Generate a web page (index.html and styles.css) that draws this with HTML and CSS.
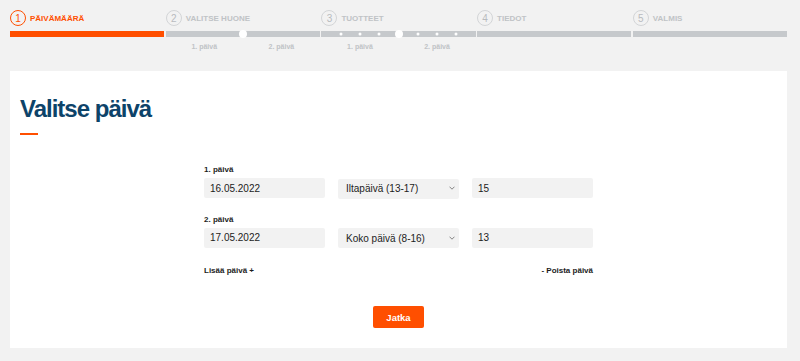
FILE: index.html
```html
<!DOCTYPE html>
<html lang="fi">
<head>
    <meta charset="UTF-8">
    <meta name="viewport" content="width=device-width, initial-scale=1.0">
    <title>Valitse päivä</title>
    <link rel="stylesheet" href="styles.css">
</head>
<body>
    <div class="page">
        <!-- Vaiheet -->
        <div class="steps">
            <div class="step active">
                <div class="step-head"><span class="step-num">1</span><span class="step-name">Päivämäärä</span></div>
                <div class="step-bar"></div>
            </div>
            <div class="step">
                <div class="step-head"><span class="step-num">2</span><span class="step-name">Valitse huone</span></div>
                <div class="step-bar">
                    <span class="mark big" style="left: 50%"></span>
                </div>
                <div class="step-days"><span>1. päivä</span><span>2. päivä</span></div>
            </div>
            <div class="step">
                <div class="step-head"><span class="step-num">3</span><span class="step-name">Tuotteet</span></div>
                <div class="step-bar">
                    <span class="mark" style="left: 12.5%"></span>
                    <span class="mark" style="left: 25%"></span>
                    <span class="mark" style="left: 37.5%"></span>
                    <span class="mark big" style="left: 50%"></span>
                    <span class="mark" style="left: 62.5%"></span>
                    <span class="mark" style="left: 75%"></span>
                    <span class="mark" style="left: 87.5%"></span>
                </div>
                <div class="step-days"><span>1. päivä</span><span>2. päivä</span></div>
            </div>
            <div class="step">
                <div class="step-head"><span class="step-num">4</span><span class="step-name">Tiedot</span></div>
                <div class="step-bar"></div>
            </div>
            <div class="step">
                <div class="step-head"><span class="step-num">5</span><span class="step-name">Valmis</span></div>
                <div class="step-bar"></div>
            </div>
        </div>

        <!-- Päivän valinta -->
        <div class="card">
            <h1>Valitse päivä</h1>
            <div class="title-line"></div>

            <form class="days">
                <div class="day">
                    <label class="day-label">1. päivä</label>
                    <div class="day-fields">
                        <input class="field" type="text" value="16.05.2022">
                        <div class="select-wrap">
                            <select class="field">
                                <option>Iltapäivä (13-17)</option>
                                <option>Koko päivä (8-16)</option>
                            </select>
                            <svg class="chevron" width="6" height="4" viewBox="0 0 6 4"><path d="M0.5 0.7 L3 3.2 L5.5 0.7" fill="none" stroke="#777" stroke-width="0.9"/></svg>
                        </div>
                        <input class="field" type="text" value="15">
                    </div>
                </div>
                <div class="day">
                    <label class="day-label">2. päivä</label>
                    <div class="day-fields">
                        <input class="field" type="text" value="17.05.2022">
                        <div class="select-wrap">
                            <select class="field">
                                <option>Koko päivä (8-16)</option>
                                <option>Iltapäivä (13-17)</option>
                            </select>
                            <svg class="chevron" width="6" height="4" viewBox="0 0 6 4"><path d="M0.5 0.7 L3 3.2 L5.5 0.7" fill="none" stroke="#777" stroke-width="0.9"/></svg>
                        </div>
                        <input class="field" type="text" value="13">
                    </div>
                </div>
                <div class="day-actions">
                    <a class="day-link">Lisää päivä +</a>
                    <a class="day-link">- Poista päivä</a>
                </div>
            </form>

            <div class="submit">
                <button class="btn" type="button">Jatka</button>
            </div>
        </div>
    </div>
</body>
</html>
```

FILE: styles.css
```css
:root {
    --bg: #f2f2f2;
    --orange: #ff4f00;
    --blue: #0d4369;
    --bar: #c6c9cc;
    --muted: #c0c3c6;
    --text: #1c1c1c;
}

* {
    margin: 0;
    padding: 0;
    box-sizing: border-box;
}

body {
    font-family: 'Liberation Sans', Arial, sans-serif;
    background: var(--bg);
    color: var(--text);
}

.page {
    width: 777px;
    margin-left: 10px;
    padding-top: 10px;
}

/* Vaiheet */
.steps {
    display: flex;
    gap: 1.5px;
}

.step {
    flex: 1;
    display: flex;
    flex-direction: column;
}

.step-head {
    display: flex;
    align-items: center;
    gap: 4px;
    height: 16px;
    margin-bottom: 5px;
}

.step-num {
    width: 16px;
    height: 16px;
    border: 1px solid #d3d5d7;
    border-radius: 50%;
    display: flex;
    justify-content: center;
    align-items: center;
    font-size: 10px;
    color: #b8bbbe;
}

.step-name {
    font-size: 8px;
    font-weight: 700;
    text-transform: uppercase;
    color: var(--muted);
}

.step-bar {
    position: relative;
    height: 6px;
    background: var(--bar);
}

.step.active .step-num {
    border-color: var(--orange);
    color: var(--orange);
}

.step.active .step-name {
    color: var(--orange);
}

.step.active .step-bar {
    background: var(--orange);
}

.mark {
    position: absolute;
    top: 50%;
    width: 3px;
    height: 3px;
    border-radius: 50%;
    background: #fff;
    transform: translate(-50%, -50%);
}

.mark.big {
    width: 8px;
    height: 8px;
}

.step-days {
    display: grid;
    grid-template-columns: 1fr 1fr;
    margin-top: 6px;
    font-size: 7px;
    line-height: 8px;
    font-weight: 700;
    color: var(--muted);
    text-align: center;
}

/* Kortti */
.card {
    margin-top: 20px;
    background: #fff;
    padding: 26px 10px 20px;
}

.card h1 {
    font-size: 24px;
    line-height: 24px;
    font-weight: 700;
    letter-spacing: -1px;
    color: var(--blue);
}

.title-line {
    width: 18px;
    height: 2px;
    margin-top: 12px;
    background: var(--orange);
}

.days {
    width: 389px;
    margin: 30px auto 0;
}

.day + .day {
    margin-top: 16px;
}

.day-label {
    display: block;
    font-size: 8px;
    line-height: 10px;
    font-weight: 700;
    margin-bottom: 3px;
}

.day-fields {
    display: grid;
    grid-template-columns: repeat(3, 1fr);
    gap: 13px;
}

.field {
    width: 100%;
    height: 20px;
    border: none;
    border-radius: 2px;
    background: var(--bg);
    padding: 0 6px;
    font-family: inherit;
    font-size: 10px;
    color: var(--text);
    outline: none;
}

select.field {
    appearance: none;
    padding-left: 8px;
}

.select-wrap {
    position: relative;
}

.chevron {
    position: absolute;
    right: 4px;
    top: 8px;
    pointer-events: none;
}

.day-actions {
    display: flex;
    justify-content: space-between;
    margin-top: 18px;
}

.day-link {
    font-size: 8px;
    line-height: 10px;
    font-weight: 700;
    color: var(--text);
    cursor: pointer;
}

.submit {
    display: flex;
    justify-content: center;
    margin-top: 30px;
}

.btn {
    width: 51px;
    height: 22px;
    border: none;
    border-radius: 2px;
    background: var(--orange);
    color: #fff;
    font-family: inherit;
    font-size: 9.5px;
    font-weight: 700;
    cursor: pointer;
}
```
